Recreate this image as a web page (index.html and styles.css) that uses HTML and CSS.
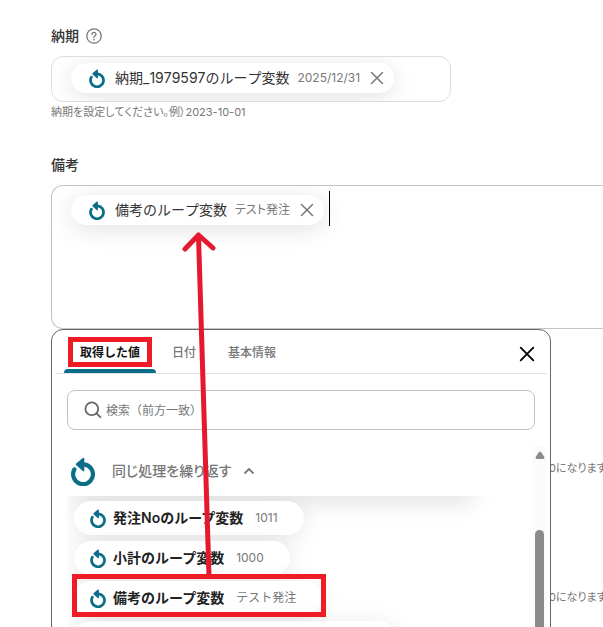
FILE: index.html
```html
<!DOCTYPE html>
<html lang="ja">
<head>
    <meta charset="UTF-8">
    <title>納期・備考</title>
    <link rel="stylesheet" href="styles.css">
</head>
<body>
<svg class="defs" width="0" height="0" aria-hidden="true">
    <symbol id="loop" viewBox="0 0 24 29">
        <path d="M13 7.400 A9.900 9.900 0 1 1 3.400 12.400" fill="none" stroke="currentColor" stroke-width="4.200" stroke-linecap="round"/>
        <path d="M5.700 7.300 L12.400 1.600 V13.400 Z" fill="currentColor" stroke="currentColor" stroke-width="1.800" stroke-linejoin="round"/>
    </symbol>
    <symbol id="cross" viewBox="0 0 14 14">
        <path d="M1.5 1.5 L12.5 12.5 M12.5 1.5 L1.5 12.5" fill="none" stroke="currentColor" stroke-linecap="round"/>
    </symbol>
</svg>

<main class="form">
    <section class="field">
        <div class="label-row">
            <span class="label" id="due-label">納期</span>
            <svg class="help" viewBox="0 0 16 16" aria-hidden="true">
                <circle cx="8" cy="8" r="7.2" fill="none" stroke="currentColor" stroke-width="1.3"/>
                <path d="M6 6.4 C6 3.8 10 3.8 10 6.3 C10 7.8 8 7.8 8 9.4" fill="none" stroke="currentColor" stroke-width="1.3" stroke-linecap="round"/>
                <circle cx="8" cy="11.6" r=".9" fill="currentColor"/>
            </svg>
        </div>
        <div class="box" role="textbox" aria-labelledby="due-label">
            <span class="chip">
                <svg class="loop-icon"><use href="#loop"/></svg>
                <span class="name">納期_1979597のループ変数</span>
                <span class="value">2025/12/31</span>
                <button class="remove" type="button"><svg><use href="#cross"/></svg></button>
            </span>
        </div>
        <p class="hint">納期を設定してください。例）2023-10-01</p>
    </section>

    <section class="field remarks">
        <div class="label-row">
            <span class="label" id="remarks-label">備考</span>
        </div>
        <div class="box area" role="textbox" aria-labelledby="remarks-label">
            <span class="chip">
                <svg class="loop-icon"><use href="#loop"/></svg>
                <span class="name">備考のループ変数</span>
                <span class="value">テスト発注</span>
                <button class="remove" type="button"><svg><use href="#cross"/></svg></button>
            </span>
            <span class="caret"></span>
        </div>

        <div class="picker">
            <div class="tabs">
                <button class="tab active" type="button">取得した値</button>
                <button class="tab" type="button">日付</button>
                <button class="tab" type="button">基本情報</button>
                <button class="close" type="button"><svg><use href="#cross"/></svg></button>
            </div>
            <label class="search">
                <svg viewBox="0 0 18 18" aria-hidden="true">
                    <circle cx="7.8" cy="7.8" r="6.4" fill="none" stroke="currentColor" stroke-width="1.8"/>
                    <path d="M12.4 12.4 L16.4 16.2" stroke="currentColor" stroke-width="1.8" stroke-linecap="round"/>
                </svg>
                <input type="text" placeholder="検索（前方一致）">
            </label>
            <div class="list">
                <div class="list-body">
                    <button class="group" type="button">
                        <svg class="group-icon"><use href="#loop"/></svg>
                        <span>同じ処理を繰り返す</span>
                        <svg class="chevron" viewBox="0 0 12 8" aria-hidden="true">
                            <path d="M1.5 6.5 L6 2 L10.5 6.5" fill="none" stroke="currentColor" stroke-width="1.8"/>
                        </svg>
                    </button>
                    <div class="options">
                        <button class="option" type="button">
                            <svg class="loop-icon"><use href="#loop"/></svg>
                            <span class="name">発注Noのループ変数</span>
                            <span class="value">1011</span>
                        </button>
                        <button class="option" type="button">
                            <svg class="loop-icon"><use href="#loop"/></svg>
                            <span class="name">小計のループ変数</span>
                            <span class="value">1000</span>
                        </button>
                        <button class="option" type="button">
                            <svg class="loop-icon"><use href="#loop"/></svg>
                            <span class="name">備考のループ変数</span>
                            <span class="value">テスト発注</span>
                        </button>
                        <button class="option wide" type="button"></button>
                    </div>
                </div>
                <div class="scrollbar">
                    <svg viewBox="0 0 10 8" aria-hidden="true"><path d="M4 1 Q5 0 6 1 L9.4 6 Q9.8 8 8.4 8 H1.6 Q.2 8 .6 6 Z" fill="currentColor"/></svg>
                    <span class="thumb"></span>
                </div>
            </div>
        </div>
    </section>

    <p class="hint side">0になります</p>
    <p class="hint side">0になります</p>
</main>

<!-- red marks: tab box, option box and the arrow between them -->
<svg class="marks" width="603" height="627" viewBox="0 0 603 627" aria-hidden="true">
    <path class="arrow" d="M209 576 L198.500 236 M185 249 L198.500 235 L213 248"/>
    <rect x="70.500" y="339.500" width="79" height="25"/>
    <rect x="74.500" y="576.500" width="249" height="38"/>
</svg>
</body>
</html>
```
FILE: styles.css
```css
* {
    box-sizing: border-box;
}

body {
    margin: 0;
    height: 100vh;
    overflow: hidden;
    background-color: #fff;
    color: #333;
    font-family: Inter, "Noto Sans CJK JP", sans-serif;
    font-size: 14px;
    line-height: 20px;
}

button {
    padding: 0;
    border: none;
    background: none;
    color: inherit;
    font: inherit;
    cursor: pointer;
}

p {
    margin: 0;
}

.defs {
    position: absolute;
}

.form {
    padding: 26px 0 0 51px;
}

.label-row {
    display: flex;
    align-items: center;
    gap: 7px;
    height: 20px;
    margin-bottom: 10px;
}

.label {
    font-weight: 500;
}

.help {
    width: 16px;
    height: 16px;
    color: #777;
}

.box {
    display: flex;
    align-items: center;
    max-width: 400px;
    height: 46px;
    padding-left: 19px;
    padding-bottom: 2px;
    border: 1px solid #dcdce4;
    border-radius: 12px;
    overflow: hidden;
}

.chip {
    display: flex;
    align-items: center;
    height: 30px;
    padding: 0 10px 0 18px;
    border-radius: 15px;
    background-color: #fff;
    box-shadow: 0 4px 24px rgba(0, 0, 0, 0.12);
    font-kerning: none;
    white-space: nowrap;
}

.loop-icon {
    width: 16px;
    height: 19px;
    color: #0b6e88;
}

.chip .name {
    margin-left: 10px;
}

.value {
    color: #777;
    font-size: 12px;
    font-weight: 400;
}

.chip .value {
    margin-left: 8px;
    font-feature-settings: "palt";
}

.remove {
    display: flex;
    margin-left: 10px;
    color: #777;
}

.remove svg {
    width: 14px;
    height: 14px;
    stroke-width: 1.5;
}

.hint {
    color: #777;
    font-size: 11px;
    font-feature-settings: "palt";
    font-kerning: none;
}

.remarks {
    position: relative;
    margin-top: 33px;
}

.area {
    align-items: flex-start;
    max-width: none;
    height: 144px;
    padding-top: 9px;
    border-color: #c4c4c4;
    border-right: none;
    border-radius: 12px 0 0 12px;
}

.caret {
    width: 1px;
    height: 35px;
    margin-top: -4px;
    margin-left: 5px;
    background-color: #000;
}

.picker {
    position: absolute;
    top: 174px;
    left: 0;
    width: 500px;
    height: 400px;
    border: 1px solid #666;
    border-radius: 12px;
    background-color: #fff;
}

.tabs {
    display: flex;
    height: 44px;
    margin: 0 3px;
    padding: 0 12px 0 9px;
    border-bottom: 1px solid #e2e2e2;
}

.tab {
    position: relative;
    padding: 2px 16px 0;
    color: #777;
    font-size: 12px;
    font-weight: 500;
}

.tab.active {
    color: #111;
    font-weight: 600;
}

.tab.active::after {
    content: "";
    position: absolute;
    left: 0;
    right: 0;
    bottom: 0;
    height: 4px;
    border-radius: 4px 4px 0 0;
    background-color: #0b6e88;
}

.close {
    display: flex;
    align-items: center;
    margin-left: auto;
    padding-top: 4px;
    color: #000;
}

.close svg {
    width: 16px;
    height: 16px;
    stroke-width: 1.6;
}

.search {
    display: flex;
    align-items: center;
    gap: 4px;
    height: 40px;
    margin: 16px 15px;
    padding-left: 16px;
    border: 1px solid #c4c4c4;
    border-radius: 8px;
    color: #666;
}

.search svg {
    width: 18px;
    height: 18px;
}

.search input {
    flex: 1;
    padding: 2px 0 0;
    border: none;
    outline: none;
    font: inherit;
    font-size: 12px;
}

.search input::placeholder {
    color: #777;
}

.list {
    display: flex;
    height: 300px;
    margin-right: 3px;
}

.list-body {
    flex: 1;
    padding: 0 34px 0 15px;
    overflow: hidden;
}

.group {
    display: flex;
    align-items: center;
    width: 100%;
    height: 50px;
    padding-left: 4px;
    background-color: #fff;
    color: #777;
    font-weight: 500;
    font-feature-settings: "palt";
    font-kerning: none;
}

.group-icon {
    width: 24px;
    height: 29px;
    margin-right: 17px;
    color: #0b6e88;
}

.chevron {
    width: 12px;
    height: 8px;
    margin-left: 12px;
}

.options {
    display: flex;
    flex-direction: column;
    align-items: flex-start;
    gap: 6px;
    height: 300px;
    padding-left: 7px;
    overflow: hidden;
}

/* shadow that the group header drops on the options */
.options::before {
    content: "";
    flex-shrink: 0;
    width: 400px;
    height: 20px;
    margin-top: -21px;
    box-shadow: 0 6px 24px rgba(0, 0, 0, 0.14);
}

.option {
    display: flex;
    align-items: center;
    flex-shrink: 0;
    height: 34px;
    padding: 0 26px 0 16px;
    border-radius: 17px;
    background-color: #fff;
    box-shadow: 0 4px 24px rgba(0, 0, 0, 0.1);
    white-space: nowrap;
}

.option .name {
    margin: 0 12px 0 7px;
    color: #222;
    font-weight: 600;
}

.option.wide {
    width: 322px;
}

.scrollbar {
    display: flex;
    flex-direction: column;
    align-items: center;
    width: 15px;
    padding-top: 5px;
    background-color: #fbfbfb;
    color: #8b8b8b;
}

.scrollbar svg {
    width: 10px;
    height: 8px;
}

.thumb {
    flex: 1;
    width: 9px;
    margin-top: 71px;
    border-radius: 5px;
    background-color: #8b8b8b;
}

.side {
    margin: 129px 0 109px 498px;
    white-space: nowrap;
}

.side + .side {
    margin-top: 0;
}

.marks {
    position: absolute;
    top: 0;
    left: 0;
    fill: none;
    stroke: #ee1c25;
    stroke-width: 5;
    pointer-events: none;
}

.marks .arrow {
    stroke: #e4182f;
    stroke-linecap: round;
    stroke-linejoin: round;
}
```
